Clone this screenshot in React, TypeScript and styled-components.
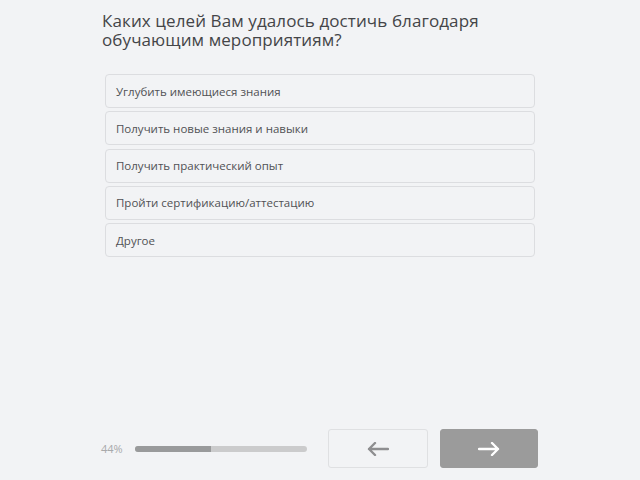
import React from 'react'
import styled, { createGlobalStyle } from 'styled-components'

const GlobalStyle = createGlobalStyle`
  html, body {
    margin: 0;
    padding: 0;
    background: #f2f3f5;
  }
  body {
    font-family: 'Open Sans', 'Noto Sans', sans-serif;
  }
`

const Page = styled.div`
  width: 640px;
  height: 480px;
  box-sizing: border-box;
  display: flex;
  flex-direction: column;
  padding: 11px 0 12px;
  background: #f2f3f5;
`

const Question = styled.h1`
  margin: 0 0 0 102px;
  width: 420px;
  font-size: 17px;
  font-weight: 400;
  line-height: 19px;
  letter-spacing: 0.1px;
  color: #444548;
`

const Options = styled.div`
  margin: 25px 0 0 105px;
  width: 430px;
  display: flex;
  flex-direction: column;
  gap: 3.3px;
`

const Option = styled.button`
  box-sizing: border-box;
  height: 34px;
  padding: 0 10px;
  display: flex;
  align-items: center;
  background: #f2f3f5;
  border: 1px solid #dcdde0;
  border-radius: 4px;
  font-family: inherit;
  font-size: 11.5px;
  color: #505154;
  text-align: left;
  cursor: pointer;
`

const Footer = styled.div`
  margin-top: auto;
  display: flex;
  align-items: center;
`

const Percent = styled.span`
  width: 24px;
  margin-left: 101px;
  font-size: 11px;
  color: #a8a9ab;
`

const Track = styled.div`
  margin-left: 10px;
  width: 172px;
  height: 6px;
  border-radius: 3px;
  background: #cbcbcc;
  overflow: hidden;
`

const Fill = styled.div`
  height: 100%;
  background: #999a9b;
`

const NavButton = styled.button<{ $primary?: boolean }>`
  box-sizing: border-box;
  width: ${p => (p.$primary ? '98px' : '100px')};
  height: 39px;
  display: flex;
  align-items: center;
  justify-content: center;
  border-radius: 3px;
  border: 1px solid ${p => (p.$primary ? '#9b9b9b' : '#dfe0e2')};
  background: ${p => (p.$primary ? '#9b9b9b' : '#f2f3f5')};
  color: ${p => (p.$primary ? '#ffffff' : '#8e8e90')};
  cursor: pointer;
  padding: 0;
`

const BackButton = styled(NavButton)`
  margin-left: 21px;
`

const NextButton = styled(NavButton)`
  margin-left: 12px;
`

const Arrow = ({ dir }: { dir: 'left' | 'right' }) => (
  <svg width="22" height="14" viewBox="0 0 22 14" fill="none">
    {dir === 'left' ? (
      <path d="M21 7H2M8 1L2 7l6 6" stroke="currentColor" strokeWidth="2.4" strokeLinecap="round" strokeLinejoin="round" />
    ) : (
      <path d="M1 7h19M14 1l6 6-6 6" stroke="currentColor" strokeWidth="2.4" strokeLinecap="round" strokeLinejoin="round" />
    )}
  </svg>
)

const answers = [
  'Углубить имеющиеся знания',
  'Получить новые знания и навыки',
  'Получить практический опыт',
  'Пройти сертификацию/аттестацию',
  'Другое',
]

export default function App() {
  const progress = 44
  return (
    <Page>
      <GlobalStyle />
      <Question>Каких целей Вам удалось достичь благодаря обучающим мероприятиям?</Question>
      <Options>
        {answers.map(a => (
          <Option key={a}>{a}</Option>
        ))}
      </Options>
      <Footer>
        <Percent>{progress}%</Percent>
        <Track>
          <Fill style={{ width: `${progress}%` }} />
        </Track>
        <BackButton>
          <Arrow dir="left" />
        </BackButton>
        <NextButton $primary>
          <Arrow dir="right" />
        </NextButton>
      </Footer>
    </Page>
  )
}
